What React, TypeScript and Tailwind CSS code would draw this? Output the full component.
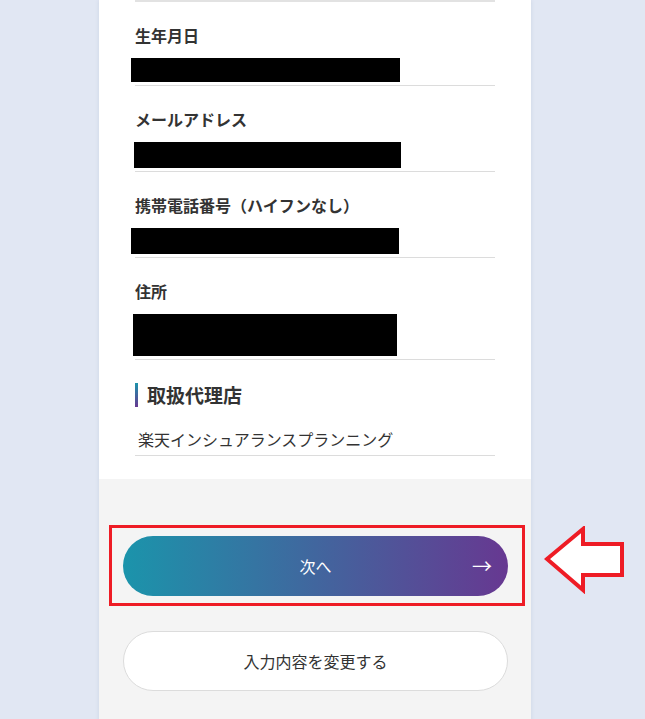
import React from 'react';

const font = { fontFamily: '"Noto Sans CJK JP", "Noto Sans", sans-serif' };

type Row = { label: string; box: string; h: string };

const rows: Row[] = [
  { label: '生年月日', box: 'w-[269px] -ml-[4px]', h: 'h-[24px]' },
  { label: 'メールアドレス', box: 'w-[267px] -ml-[1px]', h: 'h-[26px]' },
  { label: '携帯電話番号（ハイフンなし）', box: 'w-[268px] -ml-[4px]', h: 'h-[26px]' },
  { label: '住所', box: 'w-[264px] -ml-[2px]', h: 'h-[42px]' },
];

function RedArrow() {
  return (
    <svg width="82" height="68" viewBox="0 0 82 68" className="absolute left-[421px] -top-[10px]">
      <polygon
        points="3,33 39,3 39,18 78,18 78,49 39,49 39,64"
        fill="#fff"
        stroke="#ee1c25"
        strokeWidth="4"
        strokeLinejoin="miter"
      />
    </svg>
  );
}

export default function App() {
  return (
    <div className="min-h-screen bg-[#e1e7f3] flex justify-center pr-[15px]" style={font}>
      <div className="w-[432px] bg-white shadow-[0_0_4px_rgba(60,80,120,0.12)]">
        <div className="px-[36px] pb-[23px]">
          <div className="border-t-2 border-[#e2e2e2]" />
          {rows.map((r) => (
            <div key={r.label} className="border-b border-[#dcdcdc] pt-[21px] pb-[3px]">
              <div className="text-[16px] leading-[24px] font-bold text-[#333]">{r.label}</div>
              <div className={`mt-[11px] bg-black ${r.box} ${r.h}`} />
            </div>
          ))}
          <div className="mt-[23px] flex items-center">
            <div className="w-[3px] h-[24px] bg-linear-to-b/srgb from-[#1b94ab] to-[#673891]" />
            <div className="ml-[9px] text-[19px] leading-[24px] font-bold text-[#333]">取扱代理店</div>
          </div>
          <div className="mt-[20px] pl-[3px] pb-[4px] border-b border-[#dcdcdc] text-[16px] leading-[24px] text-[#333]">
            楽天インシュアランスプランニング
          </div>
        </div>
        <div className="bg-[#f4f4f4] px-[24px] pt-[57px] pb-[40px]">
          <div className="relative">
            <button className="w-[385px] h-[60px] rounded-full bg-linear-to-r/srgb from-[#1b94ab] to-[#673891] text-white grid grid-cols-[1fr_auto_1fr] items-center px-[16px]">
              <span />
              <span className="text-[16px]">次へ</span>
              <span className="justify-self-end text-[20px] leading-none">→</span>
            </button>
            <div className="absolute -left-[14px] -top-[11px] w-[416px] h-[81px] border-[3px] border-[#ee1c25] pointer-events-none" />
            <RedArrow />
          </div>
          <button className="mt-[35px] w-[385px] h-[60px] rounded-full bg-white border border-[#dcdcdc] text-[16px] text-[#333]">
            入力内容を変更する
          </button>
        </div>
      </div>
    </div>
  );
}
